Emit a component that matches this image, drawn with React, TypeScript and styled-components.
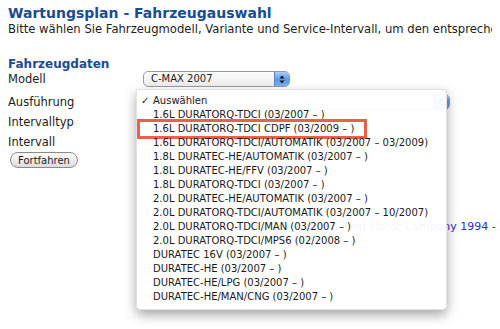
import React from 'react';
import styled, { createGlobalStyle } from 'styled-components';

const GlobalStyle = createGlobalStyle`
  html, body {
    margin: 0;
    padding: 0;
    background: #fff;
    overflow: hidden;
  }
  body {
    font-family: 'DejaVu Sans', Verdana, sans-serif;
    color: #1c1c1c;
  }
`;

interface ItemProps {
  marked?: boolean;
}

const options = [
  '1.6L DURATORQ-TDCI (03/2007 – )',
  '1.6L DURATORQ-TDCI CDPF (03/2009 – )',
  '1.6L DURATORQ-TDCI/AUTOMATIK (03/2007 – 03/2009)',
  '1.8L DURATEC-HE/AUTOMATIK (03/2007 – )',
  '1.8L DURATEC-HE/FFV (03/2007 – )',
  '1.8L DURATORQ-TDCI (03/2007 – )',
  '2.0L DURATEC-HE/AUTOMATIK (03/2007 – )',
  '2.0L DURATORQ-TDCI/AUTOMATIK (03/2007 – 10/2007)',
  '2.0L DURATORQ-TDCI/MAN (03/2007 – )',
  '2.0L DURATORQ-TDCI/MPS6 (02/2008 – )',
  'DURATEC 16V (03/2007 – )',
  'DURATEC-HE (03/2007 – )',
  'DURATEC-HE/LPG (03/2007 – )',
  'DURATEC-HE/MAN/CNG (03/2007 – )',
];

const SelectArrows = () => (
  <svg width="6" height="9" viewBox="0 0 6 9">
    <path d="M3 0.5 L5.5 3.5 L0.5 3.5 Z" fill="#111" />
    <path d="M3 8.5 L5.5 5.5 L0.5 5.5 Z" fill="#111" />
  </svg>
);

const App = () => {
  return (
    <Page>
      <GlobalStyle />
      <Title>Wartungsplan - Fahrzeugauswahl</Title>
      <Intro>
        Bitte wählen Sie Fahrzeugmodell, Variante und Service-Intervall, um den entsprechenden
        Wartungsplan anzuzeigen.
      </Intro>
      <Section>Fahrzeugdaten</Section>
      <Form>
        <Label>Modell</Label>
        <Select>
          <SelectValue>C-MAX 2007</SelectValue>
          <SelectButton>
            <SelectArrows />
          </SelectButton>
        </Select>
        <Label>Ausführung</Label>
        <Select wide>
          <SelectValue>Auswählen</SelectValue>
          <SelectButton>
            <SelectArrows />
          </SelectButton>
        </Select>
        <Label>Intervalltyp</Label>
        <Select>
          <SelectValue>Auswählen</SelectValue>
          <SelectButton>
            <SelectArrows />
          </SelectButton>
        </Select>
        <Label>Intervall</Label>
        <Select>
          <SelectValue>Auswählen</SelectValue>
          <SelectButton>
            <SelectArrows />
          </SelectButton>
        </Select>
      </Form>
      <Button>Fortfahren</Button>
      <Footer>
        Copyright © <a>Ford Motor Company 1994 - 2011</a>
      </Footer>
      <Menu>
        <Item>
          <Check>✓</Check>Auswählen
        </Item>
        {options.map((o, i) => (
          <Item key={o} marked={i === 1}>
            {o}
          </Item>
        ))}
      </Menu>
    </Page>
  );
};

const Page = styled.div`
  position: relative;
  width: 500px;
  height: 329px;
  padding: 4px 8px 0;
  box-sizing: border-box;
  white-space: nowrap;
  overflow: hidden;
`;

const Title = styled.h1`
  margin: 0;
  font-size: 14px;
  font-weight: bold;
  line-height: 18px;
  color: #1a4c8e;
`;

const Intro = styled.p`
  margin: 0;
  font-size: 11.6px;
  line-height: 15px;
  overflow: hidden;
`;

const Section = styled.h2`
  margin: 20px 0 0;
  font-size: 12px;
  font-weight: bold;
  line-height: 14px;
  color: #1a4c8e;
`;

const Form = styled.div`
  display: grid;
  grid-template-columns: 135px auto;
  grid-template-rows: 23px 20px 20px 18px;
  align-items: start;
  justify-items: start;
  margin-top: 0;
`;

const Label = styled.span`
  font-size: 11.5px;
  line-height: 16px;
`;

const Select = styled.div<{ wide?: boolean }>`
  display: flex;
  width: ${(p) => (p.wide ? '307px' : '147px')};
  height: 16px;
  box-sizing: border-box;
  border: 1px solid #9a9a9a;
  border-radius: 5px;
  background: linear-gradient(#fdfdfd, #ececec);
  overflow: hidden;
`;

const SelectValue = styled.span`
  flex: 1;
  padding-left: 7px;
  font-size: 10px;
  line-height: 14px;
`;

const SelectButton = styled.span`
  display: flex;
  align-items: center;
  justify-content: center;
  width: 14px;
  border-left: 1px solid #5b86c4;
  background: linear-gradient(#a9cdf6, #5a9aea 55%, #79b2f2);
`;

const Button = styled.button`
  display: block;
  margin: 0 0 0 2px;
  height: 16px;
  padding: 0 7px;
  border: 1px solid #8a8a8a;
  border-radius: 8px;
  background: linear-gradient(#fefefe, #dcdcdc);
  font-family: 'DejaVu Sans', Verdana, sans-serif;
  font-size: 10px;
  line-height: 13px;
  color: #1c1c1c;
`;

const Footer = styled.div`
  margin: 52px 0 0 262px;
  font-size: 11px;
  color: #2b2bd8;
  a {
    color: #2b2bd8;
  }
`;

const Menu = styled.div`
  position: absolute;
  left: 136px;
  top: 89px;
  width: 311px;
  padding: 4px 0 5px;
  box-sizing: border-box;
  background: rgba(255, 255, 255, 0.95);
  border: 1px solid #e2e2e2;
  border-radius: 0 0 5px 5px;
  box-shadow: 0 5px 12px rgba(0, 0, 0, 0.35);
`;

const Item = styled.div<ItemProps>`
  position: relative;
  height: 14px;
  padding-left: 16px;
  font-size: 10px;
  line-height: 14px;
  color: #1a1a1a;
  &::after {
    content: '';
    display: ${(p) => (p.marked ? 'block' : 'none')};
    position: absolute;
    left: 0;
    top: -3px;
    width: 230px;
    height: 20px;
    box-sizing: border-box;
    border: 3px solid #ec5f4a;
  }
`;

const Check = styled.span`
  position: absolute;
  left: 4px;
  font-size: 10px;
`;

export default App;
